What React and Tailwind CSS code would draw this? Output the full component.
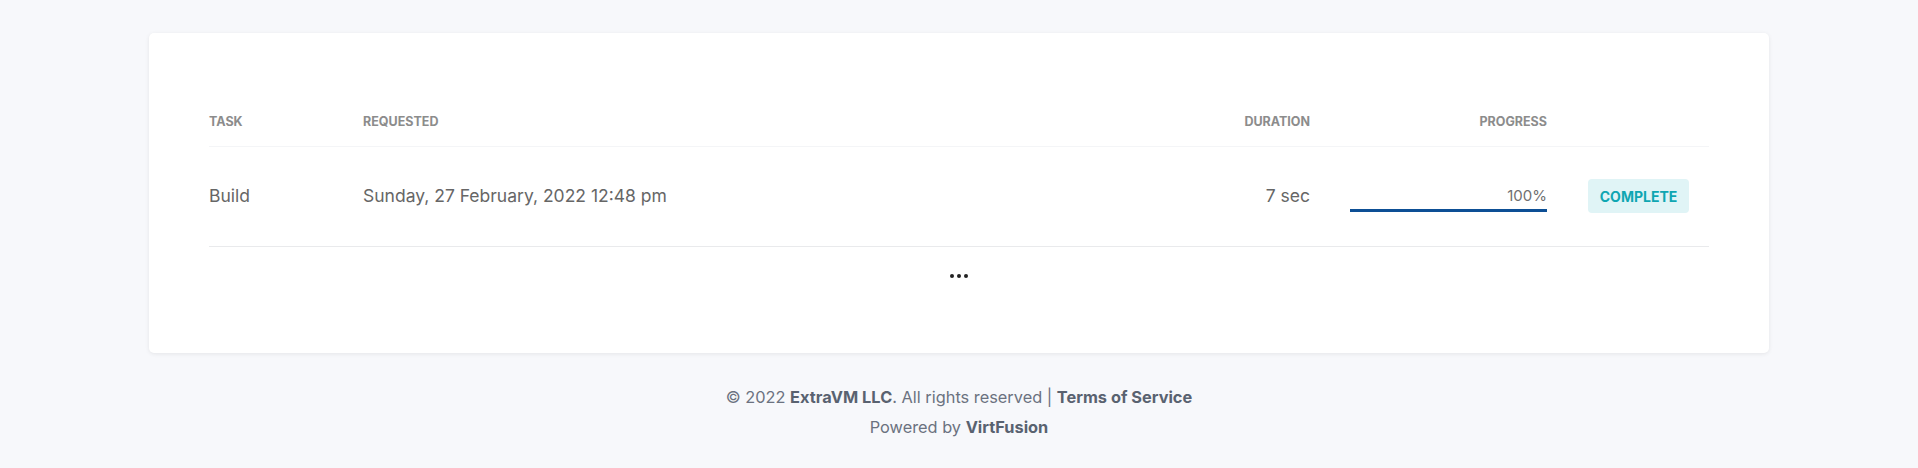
import React from 'react'

const tasks = [
  {
    name: 'Build',
    requested: 'Sunday, 27 February, 2022 12:48 pm',
    duration: '7 sec',
    progress: 100,
    status: 'Complete',
  },
]

export default function App() {
  return (
    <div className="min-h-screen bg-[#f7f8fb] pt-[33px] font-['Inter',sans-serif]">
      <div className="mx-[149px] bg-white rounded-[5px] shadow-[0_1px_4px_rgba(0,0,0,0.08)] px-[60px] pt-[60px] pb-[60px]">
        <div className="grid grid-cols-[154px_847px_100px_237px_162px] text-[12.5px] leading-[16px] font-bold uppercase text-[#8c8c8c] border-b border-[#f4f5f7]">
          <div className="pt-[21px] pb-[16px]">Task</div>
          <div className="pt-[21px] pb-[16px]">Requested</div>
          <div className="pt-[21px] pb-[16px] text-right">Duration</div>
          <div className="pt-[21px] pb-[16px] text-right">Progress</div>
          <div />
        </div>

        {tasks.map(t => (
          <div key={t.name} className="grid grid-cols-[154px_847px_100px_237px_162px] items-center border-b border-[#e9eaec] pt-[32px] pb-[33px] text-[17.5px] text-[#666]">
            <div>{t.name}</div>
            <div>{t.requested}</div>
            <div className="text-right">{t.duration}</div>
            <div className="pl-[40px]">
              <div className="pt-[5px] text-right text-[15px] leading-[20px] text-[#707070]">{t.progress}%</div>
              <div className="mt-[3px] h-[3px] bg-[#e5e7eb]">
                <div className="h-full bg-[#0d4f95]" style={{ width: t.progress + '%' }} />
              </div>
            </div>
            <div className="pl-[41px]">
              <span className="flex w-[101px] h-[34px] items-center justify-center rounded-[4px] bg-[#e0f4f6] text-[14px] font-bold uppercase text-[#0fa6b2]">
                {t.status}
              </span>
            </div>
          </div>
        ))}

        <div className="flex justify-center gap-[3px] pt-[27px] pb-[15px]">
          <span className="w-[4px] h-[4px] rounded-full bg-[#222]" />
          <span className="w-[4px] h-[4px] rounded-full bg-[#222]" />
          <span className="w-[4px] h-[4px] rounded-full bg-[#222]" />
        </div>
      </div>

      <footer className="mt-[29px] text-center text-[16.35px] leading-[30px] text-[#6b7280]">
        <div>
          © 2022 <span className="font-bold text-[#596270]">ExtraVM LLC</span>. All rights reserved | <span className="font-bold text-[#596270]">Terms of Service</span>
        </div>
        <div>
          Powered by <span className="font-bold text-[#596270]">VirtFusion</span>
        </div>
      </footer>
    </div>
  )
}
